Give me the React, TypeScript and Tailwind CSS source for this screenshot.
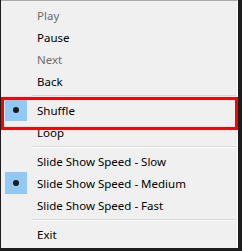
import React from "react";

type Item =
  | { kind: "item"; label: string; disabled?: boolean; checked?: boolean }
  | { kind: "sep" };

const items: Item[] = [
  { kind: "item", label: "Play", disabled: true },
  { kind: "item", label: "Pause" },
  { kind: "item", label: "Next", disabled: true },
  { kind: "item", label: "Back" },
  { kind: "sep" },
  { kind: "item", label: "Shuffle", checked: true },
  { kind: "item", label: "Loop" },
  { kind: "sep" },
  { kind: "item", label: "Slide Show Speed - Slow" },
  { kind: "item", label: "Slide Show Speed - Medium", checked: true },
  { kind: "item", label: "Slide Show Speed - Fast" },
  { kind: "sep" },
  { kind: "item", label: "Exit" },
];

export default function App() {
  return (
    <div
      className="w-[242px] h-[251px] bg-[#1c1c1c] pl-[1px] pr-[4px] pb-[3px] relative"
      style={{ fontFamily: '"Noto Sans", "Open Sans", sans-serif' }}
    >
      <div className="h-full bg-[#f0f0f0] border-t border-[#a9a9a9] border-r border-r-[#fafafa] pt-[3px]">
        {items.map((item, i) =>
          item.kind === "sep" ? (
            <div key={i} className="h-[7px] flex flex-col justify-center pl-[31px] pr-[1px]">
              <div className="h-px bg-[#d7d7d7]" />
              <div className="h-px bg-white" />
            </div>
          ) : (
            <div key={i} className="h-[22px] flex items-center">
              <div className="w-[36px] h-full flex items-center pl-[4px]">
                {item.checked && (
                  <div className="w-[22px] h-[22px] bg-[#90c8f6] flex items-center justify-center">
                    <div className="w-[6px] h-[6px] rounded-full bg-[#1a1a1a]" />
                  </div>
                )}
              </div>
              <span
                className={`text-[11.5px] leading-none pt-[2px] ${
                  item.disabled ? "text-[#6d6d6d]" : "text-black"
                }`}
              >
                {item.label}
              </span>
            </div>
          )
        )}
      </div>
      {/* red highlight box drawn on top */}
      <div className="absolute left-[1px] top-[97px] w-[237px] h-[33px] border-[3px] border-[#ff0000]" />
    </div>
  );
}
